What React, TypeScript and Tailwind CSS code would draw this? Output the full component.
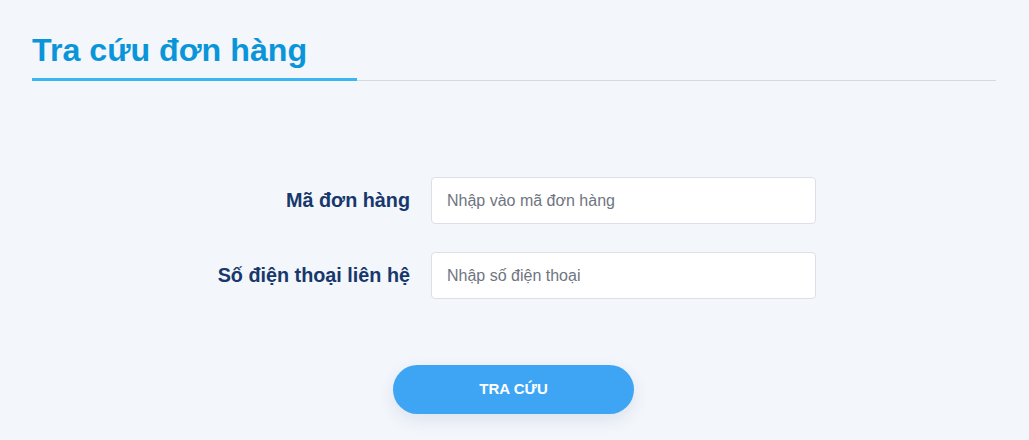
import React from 'react';

const font = { fontFamily: '"Liberation Sans", Arial, sans-serif' };

const Field: React.FC<{ label: string; placeholder: string }> = ({ label, placeholder }) => (
    <div className="flex items-center">
        <label className="w-[410px] shrink-0 text-right text-[19.8px] font-bold text-[#17386b]">{label}</label>
        <input
            type="text"
            placeholder={placeholder}
            className="ml-[21px] h-[47px] w-[385px] rounded-[4px] border border-[#dcdfe6] bg-white px-[15px] text-[16px] text-[#333] outline-none placeholder:text-[#6f7580]"
        />
    </div>
);

export default function App() {
    return (
        <div className="min-h-[440px] w-full bg-[#f3f6fb]" style={font}>
            <div className="px-[32px] pt-[31px]">
                {/* Heading */}
                <div className="w-[964px] border-b border-[#d6d9de]">
                    <h1 className="mb-[-1px] inline-block w-[325px] border-b-[3px] border-[#3bb6f2] pb-[9px] text-[32.2px] leading-[38px] font-bold text-[#0b95d9]">
                        Tra cứu đơn hàng
                    </h1>
                </div>
            </div>

            {/* Form */}
            <div className="flex flex-col gap-[28px] pt-[96px]">
                <Field label="Mã đơn hàng" placeholder="Nhập vào mã đơn hàng" />
                <Field label="Số điện thoại liên hệ" placeholder="Nhập số điện thoại" />
            </div>

            <div className="flex pt-[66px] pb-[25px] pl-[393px]">
                <button className="h-[49px] w-[241px] rounded-full bg-[#3ea5f5] text-[15px] font-bold text-white shadow-[0_6px_16px_rgba(60,90,140,0.12)]">
                    TRA CỨU
                </button>
            </div>
        </div>
    );
}
